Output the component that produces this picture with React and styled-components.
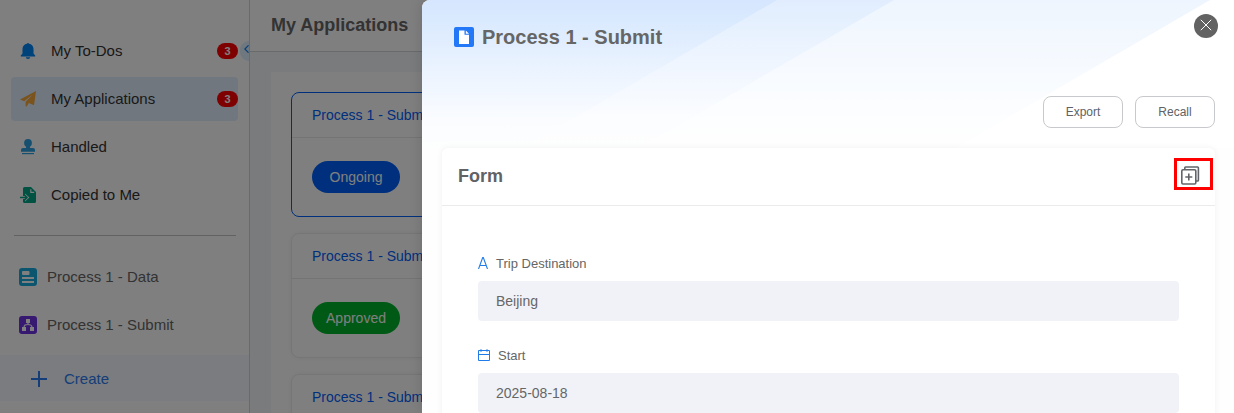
import styled, { createGlobalStyle } from "styled-components";

const menu = [
  { id: 1, label: "My To-Dos", icon: "bell", count: 3 },
  { id: 2, label: "My Applications", icon: "plane", count: 3, active: true },
  { id: 3, label: "Handled", icon: "stamp" },
  { id: 4, label: "Copied to Me", icon: "copied" },
];

const forms = [
  { id: 1, label: "Process 1 - Data", icon: "data" },
  { id: 2, label: "Process 1 - Submit", icon: "flow" },
];

const applications = [
  { id: 1, title: "Process 1 - Submit", status: "Ongoing", color: "#0060fa", active: true },
  { id: 2, title: "Process 1 - Submit", status: "Approved", color: "#00b42a" },
  { id: 3, title: "Process 1 - Submit" },
];

const fields = [
  { id: 1, label: "Trip Destination", icon: "text", value: "Beijing" },
  { id: 2, label: "Start", icon: "date", value: "2025-08-18" },
];

const icons = {
  bell: (
    <svg width="16" height="16" viewBox="0 0 16 16" fill="#0084f5">
      <path d="M8 0a1 1 0 0 1 1 .8c2.700.4 4.500 2.500 4.500 5.200v4.500l1.700 2.100v.9H.8v-.9l1.700-2.100V6C2.500 3.300 4.300 1.200 7 .8A1 1 0 0 1 8 0Z" />
      <path d="M5.800 14.300h4.400a2.200 1.700 0 0 1-4.400 0Z" />
    </svg>
  ),
  plane: (
    <svg width="16" height="16" viewBox="0 0 16 16" fill="#f5a73b">
      <path d="M16 0 14 14.200 8.800 12 6.700 15.500 5.600 15.200V10.700L13 3.200 4.200 10.200 0 8.500Z" />
    </svg>
  ),
  stamp: (
    <svg width="16" height="16" viewBox="0 0 16 16" fill="#2f9fe0">
      <circle cx="8" cy="3.900" r="3.900" />
      <path d="M6 6.500h4V9h3a2 2 0 0 1 2 2v1.700H1V11a2 2 0 0 1 2-2h3Z" />
      <path d="M2 14h12v1.200H2Z" />
    </svg>
  ),
  copied: (
    <svg width="16" height="16" viewBox="0 0 16 16">
      <path d="M4.500 0H11l5 5v9.500a1.500 1.500 0 0 1-1.500 1.500h-10A1.500 1.500 0 0 1 3 14.500v-13A1.500 1.500 0 0 1 4.500 0Z" fill="#00a585" />
      <path d="M10.800 2.200v3.200h3.400" fill="none" stroke="#fff" strokeWidth="1.100" />
      <path d="M0 9h5V6.600L9.300 10.500 5 14.400V12H0Z" fill="#fff" />
      <path d="M0 10.500h6.800M4.300 7.700l2.700 2.800-2.700 2.800" fill="none" stroke="#00a585" strokeWidth="1.500" />
    </svg>
  ),
  data: (
    <svg width="18" height="18" viewBox="0 0 18 18">
      <rect width="18" height="18" rx="3" fill="#18aadf" />
      <path d="M4 3h5.500a1 1 0 0 1 1 1v2a1 1 0 0 1-1 1H4a1 1 0 0 1-1-1V4a1 1 0 0 1 1-1ZM3 9h12v2H3ZM3 13h12v2H3Z" fill="#fff" />
    </svg>
  ),
  flow: (
    <svg width="18" height="18" viewBox="0 0 18 18">
      <rect width="18" height="18" rx="3" fill="#7132e2" />
      <path d="M7 3h4v4H7ZM3 11h4v4H3ZM11 11h4v4h-4Z" fill="#fff" />
      <path d="M9 6v2.500M5 11.500C5 9 6.500 8.500 9 8.500s4 .5 4 3" fill="none" stroke="#fff" strokeWidth="1.200" />
    </svg>
  ),
  text: (
    <svg width="10" height="12" viewBox="0 0 10 12" fill="none" stroke="#1f7ce8" strokeWidth="1.100">
      <path d="M.5 12 4.700.5h.6L9.500 12M2 8.500h6" />
    </svg>
  ),
  date: (
    <svg width="12" height="12" viewBox="0 0 12 12" fill="none" stroke="#1f7ce8">
      <path d="M.5 1.500h11v10H.5ZM.5 5.500h11" />
      <path d="M3 0v3M9 0v3" strokeOpacity=".6" strokeWidth="1.400" />
    </svg>
  ),
};

const Sidebar = () => (
  <Aside>
    <MenuList>
      {menu.map((item) => (
        <MenuItem key={item.id} $active={item.active}>
          {icons[item.icon]}
          <ItemLabel>{item.label}</ItemLabel>
          {item.count && <Count>{item.count}</Count>}
        </MenuItem>
      ))}
    </MenuList>
    <Divider />
    <FormList>
      {forms.map((item) => (
        <FormItem key={item.id}>
          {icons[item.icon]}
          <ItemLabel>{item.label}</ItemLabel>
        </FormItem>
      ))}
    </FormList>
    <CreateButton>
      <svg width="16" height="16" viewBox="0 0 16 16" stroke="#2a7bf0" strokeWidth="2">
        <path d="M8 .5v15M.5 8h15" strokeLinecap="round" />
      </svg>
      Create
    </CreateButton>
    <Collapse>
      <svg width="5" height="8" viewBox="0 0 5 8" fill="none" stroke="#0d7cf2" strokeWidth="1.100">
        <path d="M4.500.3.800 4l3.700 3.700" />
      </svg>
    </Collapse>
  </Aside>
);

const Applications = () => (
  <Main>
    <MainHeader>My Applications</MainHeader>
    <Panel>
      {applications.map((item) => (
        <AppCard key={item.id} $active={item.active}>
          <AppTitle>{item.title}</AppTitle>
          {item.status && (
            <AppBody>
              <Status $color={item.color}>{item.status}</Status>
            </AppBody>
          )}
        </AppCard>
      ))}
    </Panel>
  </Main>
);

const DetailDrawer = () => (
  <Drawer>
    <Backdrop width="812" height="148" viewBox="0 0 812 148">
      <defs>
        <linearGradient id="fade" x1="0" y1="0" x2="0" y2="1">
          <stop offset="0" stopColor="#d5e6fe" />
          <stop offset=".12" stopColor="#d9e9fe" />
          <stop offset=".5" stopColor="#ecf4ff" />
          <stop offset=".8" stopColor="#fafcff" />
          <stop offset="1" stopColor="#fdfefe" />
        </linearGradient>
      </defs>
      <rect width="812" height="148" fill="url(#fade)" />
      <path d="M355 0H812V148H100Z" fill="#fff" fillOpacity=".3" />
      <path d="M472 0H812V148H217Z" fill="#fff" fillOpacity=".45" />
      <path d="M788 0H812V148H534Z" fill="#fff" />
    </Backdrop>
    <CloseButton>
      <svg width="12" height="12" viewBox="0 0 12 12" stroke="#fff" strokeWidth="1">
        <path d="m.8.8 10.400 10.400M11.200.8.800 11.200" />
      </svg>
    </CloseButton>
    <DrawerHeader>
      <svg width="20" height="20" viewBox="0 0 20 20">
        <rect width="20" height="20" rx="2" fill="#2378f7" />
        <path d="M5 3.500h5.500v4.200H15v9.300H5Z" fill="#fff" />
        <path d="M11.800 3.500 15 6.700h-3.200Z" fill="#fff" />
      </svg>
      Process 1 - Submit
    </DrawerHeader>
    <Actions>
      <ActionButton>Export</ActionButton>
      <ActionButton>Recall</ActionButton>
    </Actions>
    <FormCard>
      <FormHeader>
        <h3>Form</h3>
        <ExpandButton>
          <svg width="19" height="19" viewBox="0 0 19 19" fill="none" stroke="#626469" strokeWidth="1.600">
            <rect x=".8" y="3.800" width="14" height="14.200" rx="1.200" />
            <path d="M3.800 3.800V1.800a.8.800 0 0 1 .8-.8h12a.8.800 0 0 1 .8.800v12.400a.8.800 0 0 1-.8.800H15M7.800 7.500v7M4.300 11h7" />
          </svg>
        </ExpandButton>
      </FormHeader>
      <FormBody>
        {fields.map((field) => (
          <Field key={field.id}>
            <Label>
              {icons[field.icon]}
              {field.label}
            </Label>
            <Value>{field.value}</Value>
          </Field>
        ))}
      </FormBody>
    </FormCard>
  </Drawer>
);

const App = () => (
  <Page>
    <GlobalStyle />
    <Sidebar />
    <Applications />
    <Mask />
    <DetailDrawer />
  </Page>
);

const GlobalStyle = createGlobalStyle`
  * {
    box-sizing: border-box;
  }

  body {
    margin: 0;
    overflow: hidden;
    font-family: "Liberation Sans", Arial, sans-serif;
  }

  svg {
    display: block;
    flex-shrink: 0;
  }
`;

const Page = styled.div`
  position: relative;
  display: flex;
  height: 413px;
  overflow: hidden;
  background-color: #fff;
`;

const Aside = styled.aside`
  position: relative;
  flex: 0 0 250px;
  border-right: 1px solid #d2d4d6;
`;

const MenuList = styled.nav`
  display: flex;
  flex-direction: column;
  gap: 4px;
  padding: 29px 11px 0;
`;

const MenuItem = styled.a`
  display: flex;
  align-items: center;
  gap: 15px;
  width: 227px;
  height: 44px;
  padding-left: 9px;
  border-radius: 4px;
  font-size: 15px;
  color: #333;
  background-color: ${(props) => (props.$active ? "#e0efff" : "transparent")};
`;

const ItemLabel = styled.span`
  padding-bottom: 2px;
`;

const Count = styled.b`
  width: 21px;
  height: 16px;
  margin-left: auto;
  border-radius: 8px;
  background-color: #ff0000;
  color: #fff;
  font-size: 11px;
  line-height: 16px;
  text-align: center;
`;

const Divider = styled.hr`
  height: 1px;
  margin: 18px 13px 0 14px;
  border: none;
  background-color: #c4c4c4;
`;

const FormList = styled.nav`
  display: flex;
  flex-direction: column;
  gap: 4px;
  padding: 19px 19px 8px;
`;

const FormItem = styled.a`
  display: flex;
  align-items: center;
  gap: 10px;
  height: 44px;
  font-size: 15px;
  color: #666;
`;

const CreateButton = styled.div`
  display: flex;
  align-items: center;
  gap: 17px;
  height: 46px;
  padding: 1px 0 0 31px;
  background-color: #f5f9ff;
  color: #2a7bf0;
  font-size: 15px;
`;

const Collapse = styled.div`
  position: absolute;
  top: 41px;
  right: 0;
  width: 9px;
  height: 20px;
  padding: 4px 0 0 4px;
  border-radius: 9px 0 0 9px;
  background-color: #deeefe;
`;

const Main = styled.main`
  flex: 1;
  background-color: #f3f6fa;
`;

const MainHeader = styled.h2`
  height: 52px;
  margin: 0;
  padding-left: 21px;
  border-bottom: 1px solid #d2d4d6;
  background-color: #fff;
  font-size: 18px;
  line-height: 50px;
  color: #666;
`;

const Panel = styled.section`
  display: flex;
  flex-direction: column;
  gap: 16px;
  margin: 20px 20px 0 21px;
  padding: 20px;
  background-color: #fff;
`;

const AppCard = styled.article`
  flex: 0 0 125px;
  border: 1px solid ${(props) => (props.$active ? "#0060fa" : "#ececec")};
  border-radius: 8px;
  box-shadow: ${(props) => (props.$active ? "none" : "0 0 5px rgba(0, 0, 0, 0.06)")};
`;

const AppTitle = styled.div`
  height: 45px;
  padding-left: 20px;
  border-bottom: 1px solid #e8e8e8;
  font-size: 14px;
  line-height: 44px;
  color: #0060fa;
`;

const AppBody = styled.div`
  padding: 23px 20px;
`;

const Status = styled.div`
  width: 88px;
  height: 32px;
  border-radius: 16px;
  background-color: ${(props) => props.$color};
  color: #fff;
  font-size: 14px;
  line-height: 32px;
  text-align: center;
`;

const Mask = styled.div`
  position: absolute;
  inset: 0;
  background-color: rgba(0, 0, 0, 0.5);
`;

const Drawer = styled.section`
  position: absolute;
  top: 0;
  right: 0;
  bottom: 0;
  width: 812px;
  padding: 0 19px 0 20px;
  border-radius: 8px 0 0 0;
  background-color: #fefefe;
  box-shadow: 0 0 14px rgba(0, 0, 0, 0.14);
  overflow: hidden;
`;

const Backdrop = styled.svg`
  position: absolute;
  top: 0;
  left: 0;
`;

const CloseButton = styled.div`
  position: absolute;
  top: 14px;
  right: 16px;
  display: flex;
  align-items: center;
  justify-content: center;
  width: 24px;
  height: 24px;
  padding-bottom: 2px;
  border-radius: 50%;
  background-color: #626262;
`;

const DrawerHeader = styled.h1`
  position: relative;
  display: flex;
  align-items: center;
  gap: 8px;
  height: 74px;
  margin: 0;
  padding-left: 12px;
  font-size: 20px;
  color: #666;
`;

const Actions = styled.div`
  position: relative;
  display: flex;
  justify-content: flex-end;
  gap: 12px;
  padding: 22px 0 20px;
`;

const ActionButton = styled.div`
  width: 80px;
  height: 32px;
  border: 1px solid #c8c9cc;
  border-radius: 8px;
  background-color: #fff;
  color: #606266;
  font-size: 12px;
  line-height: 30px;
  text-align: center;
`;

const FormCard = styled.article`
  position: relative;
  height: 300px;
  border-radius: 6px;
  background-color: #fff;
  box-shadow: 0 0 6px rgba(0, 0, 0, 0.06);
`;

const FormHeader = styled.div`
  display: flex;
  justify-content: space-between;
  height: 58px;
  padding: 10px 2px 0 16px;
  border-bottom: 1px solid #ebebed;

  h3 {
    margin: 0;
    font-size: 18px;
    line-height: 37px;
    color: #606266;
  }
`;

const ExpandButton = styled.div`
  width: 39px;
  height: 32px;
  padding: 5px 0 0 4px;
  border: 3px solid #ff0000;
`;

const FormBody = styled.div`
  display: flex;
  flex-direction: column;
  gap: 24px;
  padding: 47px 36px 0;
`;

const Field = styled.div`
  display: flex;
  flex-direction: column;
  gap: 8px;
`;

const Label = styled.div`
  display: flex;
  align-items: center;
  gap: 8px;
  height: 20px;
  color: #666;
  font-size: 13px;
`;

const Value = styled.div`
  height: 40px;
  padding-left: 18px;
  border-radius: 4px;
  background-color: #f1f2f7;
  color: #666;
  font-size: 14px;
  line-height: 40px;
`;

export default App;
